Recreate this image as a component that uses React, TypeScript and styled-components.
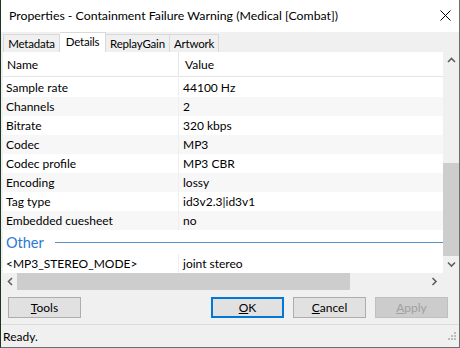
import styled, { createGlobalStyle } from "styled-components";

const GlobalStyle = createGlobalStyle`
  html, body {
    margin: 0;
    padding: 0;
    background: #1d3523;
  }
  body {
    font-family: Lato, "Noto Sans", sans-serif;
    font-size: 12px;
    color: #000;
  }
`;

const Window = styled.div`
  width: 460px;
  height: 348px;
  box-sizing: border-box;
  background: #f0f0f0;
  border-left: 1px solid #1d3523;
  border-right: 1px solid #6e6e6e;
  border-bottom: 1px solid #6e6e6e;
  display: flex;
  flex-direction: column;
  overflow: hidden;
`;

const TitleBar = styled.div`
  height: 31px;
  flex: none;
  background: #fff;
  display: flex;
  align-items: center;
  justify-content: space-between;
  padding: 0 0 1px 8px;
`;

const Title = styled.span`
  font-size: 12.3px;
  white-space: nowrap;
`;

const CloseButton = styled.div`
  width: 28px;
  height: 28px;
  display: flex;
  align-items: center;
  justify-content: center;
`;

const TabStrip = styled.div`
  height: 20px;
  flex: none;
  display: flex;
  align-items: flex-end;
  padding-left: 2px;
`;

const Tab = styled.div<{ $active?: boolean; $w: number }>`
  box-sizing: border-box;
  width: ${(p) => p.$w}px;
  height: ${(p) => (p.$active ? 20 : 18)}px;
  border: 1px solid #d9d9d9;
  border-bottom: none;
  background: ${(p) => (p.$active ? "#fff" : "#f0f0f0")};
  display: flex;
  align-items: center;
  justify-content: center;
  white-space: nowrap;
  font-size: 11.5px;
  letter-spacing: -0.2px;
  padding-bottom: ${(p) => (p.$active ? 2 : 0)}px;
  & + & {
    border-left: none;
  }
`;

const Panel = styled.div`
  height: 238px;
  flex: none;
  margin-left: 2px;
  display: grid;
  grid-template-columns: 1fr 16px;
  grid-template-rows: 1fr 17px;
`;

const List = styled.div`
  background: #fff;
  display: flex;
  flex-direction: column;
  overflow: hidden;
`;

const HeaderRow = styled.div`
  height: 24px;
  flex: none;
  display: grid;
  grid-template-columns: 175px 1fr;
  border-bottom: 1px solid #e5e5e5;
  margin-bottom: 1px;
`;

const HeaderCell = styled.div<{ $divider?: boolean }>`
  display: flex;
  align-items: center;
  padding-left: ${(p) => (p.$divider ? 6 : 4)}px;
  border-left: ${(p) => (p.$divider ? "1px solid #e5e5e5" : "none")};
`;

const Row = styled.div<{ $shade?: boolean }>`
  height: 19px;
  flex: none;
  display: grid;
  grid-template-columns: 175px 1fr;
  background: ${(p) => (p.$shade ? "#f7f7f7" : "#fff")};
`;

const Cell = styled.div<{ $divider?: boolean }>`
  display: flex;
  align-items: center;
  white-space: nowrap;
  padding-left: ${(p) => (p.$divider ? 4 : 3)}px;
  border-left: ${(p) => (p.$divider ? "1px solid #efefef" : "none")};
`;

const GroupHeader = styled.div`
  height: 24px;
  flex: none;
  display: flex;
  align-items: center;
  gap: 11px;
  padding-left: 3px;
  color: #2a78d4;
  font-size: 14.5px;
`;

const GroupLine = styled.div`
  flex: 1;
  height: 1px;
  background: #5b8ec9;
`;

const VScroll = styled.div`
  background: #f0f0f0;
  display: flex;
  flex-direction: column;
  align-items: center;
`;

const HScroll = styled.div`
  background: #f0f0f0;
  display: flex;
  align-items: center;
`;

const ArrowBox = styled.div<{ $w: number; $h: number }>`
  width: ${(p) => p.$w}px;
  height: ${(p) => p.$h}px;
  flex: none;
  display: flex;
  align-items: center;
  justify-content: center;
`;

const Track = styled.div<{ $vertical?: boolean }>`
  flex: 1;
  align-self: stretch;
  display: flex;
  flex-direction: ${(p) => (p.$vertical ? "column" : "row")};
`;

const Thumb = styled.div`
  background: #cdcdcd;
`;

const Corner = styled.div`
  background: #f0f0f0;
`;

const ButtonRow = styled.div`
  height: 35px;
  flex: none;
  display: flex;
  align-items: flex-start;
  padding: 7px 11px 0 7px;
  gap: 9px;
  box-sizing: border-box;
  border-bottom: 1px solid #dcdcdc;
`;

const Button = styled.div<{ $default?: boolean; $disabled?: boolean }>`
  width: 73px;
  height: 21px;
  box-sizing: border-box;
  display: flex;
  align-items: center;
  justify-content: center;
  background: ${(p) => (p.$disabled ? "#cccccc" : "#e1e1e1")};
  color: ${(p) => (p.$disabled ? "#a0a0a0" : "#000")};
  border: ${(p) =>
    p.$default
      ? "2px solid #0078d7"
      : p.$disabled
      ? "1px solid #bfbfbf"
      : "1px solid #adadad"};
`;

const Spacer = styled.div`
  flex: 1;
`;

const StatusBar = styled.div`
  flex: 1;
  display: flex;
  align-items: center;
  justify-content: space-between;
  padding: 0 2px 0 2px;
`;

const tabs: [string, number][] = [
  ["Metadata", 57],
  ["Details", 46],
  ["ReplayGain", 64],
  ["Artwork", 49],
];

const rows: [string, string][] = [
  ["Sample rate", "44100 Hz"],
  ["Channels", "2"],
  ["Bitrate", "320 kbps"],
  ["Codec", "MP3"],
  ["Codec profile", "MP3 CBR"],
  ["Encoding", "lossy"],
  ["Tag type", "id3v2.3|id3v1"],
  ["Embedded cuesheet", "no"],
];

const Chevron = ({ dir }: { dir: "up" | "down" | "left" | "right" }) => {
  const paths = {
    up: "M1 5 L4.5 1.5 L8 5",
    down: "M1 1.5 L4.5 5 L8 1.5",
    left: "M5 1 L1.5 4.5 L5 8",
    right: "M1.5 1 L5 4.5 L1.5 8",
  };
  const horiz = dir === "left" || dir === "right";
  return (
    <svg width={horiz ? 7 : 9} height={horiz ? 9 : 7}>
      <path d={paths[dir]} fill="none" stroke="#606060" strokeWidth="1.6" />
    </svg>
  );
};

export default function App() {
  return (
    <>
      <GlobalStyle />
      <Window>
        <TitleBar>
          <Title>Properties - Containment Failure Warning (Medical [Combat])</Title>
          <CloseButton>
            <svg width="11" height="11">
              <path d="M0.5 0.5 L10.5 10.5 M10.5 0.5 L0.5 10.5" stroke="#000" strokeWidth="1" />
            </svg>
          </CloseButton>
        </TitleBar>
        <TabStrip>
          {tabs.map(([label, w]) => (
            <Tab key={label} $w={w} $active={label === "Details"}>
              {label}
            </Tab>
          ))}
        </TabStrip>
        <Panel>
          <List>
            <HeaderRow>
              <HeaderCell>Name</HeaderCell>
              <HeaderCell $divider>Value</HeaderCell>
            </HeaderRow>
            {rows.map(([name, value], i) => (
              <Row key={name} $shade={i % 2 === 1}>
                <Cell>{name}</Cell>
                <Cell $divider>{value}</Cell>
              </Row>
            ))}
            <GroupHeader>
              Other
              <GroupLine />
            </GroupHeader>
            <Row>
              <Cell>&lt;MP3_STEREO_MODE&gt;</Cell>
              <Cell $divider>joint stereo</Cell>
            </Row>
          </List>
          <VScroll>
            <ArrowBox $w={16} $h={17}>
              <Chevron dir="up" />
            </ArrowBox>
            <Track $vertical>
              <Thumb style={{ marginTop: 94, height: 93 }} />
            </Track>
            <ArrowBox $w={16} $h={17}>
              <Chevron dir="down" />
            </ArrowBox>
          </VScroll>
          <HScroll>
            <ArrowBox $w={14} $h={17}>
              <Chevron dir="left" />
            </ArrowBox>
            <Track>
              <Thumb style={{ width: 333 }} />
            </Track>
            <ArrowBox $w={17} $h={17}>
              <Chevron dir="right" />
            </ArrowBox>
          </HScroll>
          <Corner />
        </Panel>
        <ButtonRow>
          <Button>
            <span>
              <u>T</u>ools
            </span>
          </Button>
          <Spacer />
          <Button $default>
            <span>
              <u>O</u>K
            </span>
          </Button>
          <Button>
            <span>
              <u>C</u>ancel
            </span>
          </Button>
          <Button $disabled>
            <span>
              <u>A</u>pply
            </span>
          </Button>
        </ButtonRow>
        <StatusBar>
          <span>Ready.</span>
          <svg width="10" height="10">
            {[
              [7, 1],
              [4, 4],
              [7, 4],
              [1, 7],
              [4, 7],
              [7, 7],
            ].map(([x, y]) => (
              <rect key={`${x}-${y}`} x={x} y={y} width="2" height="2" fill="#bcbcbc" />
            ))}
          </svg>
        </StatusBar>
      </Window>
    </>
  );
}
